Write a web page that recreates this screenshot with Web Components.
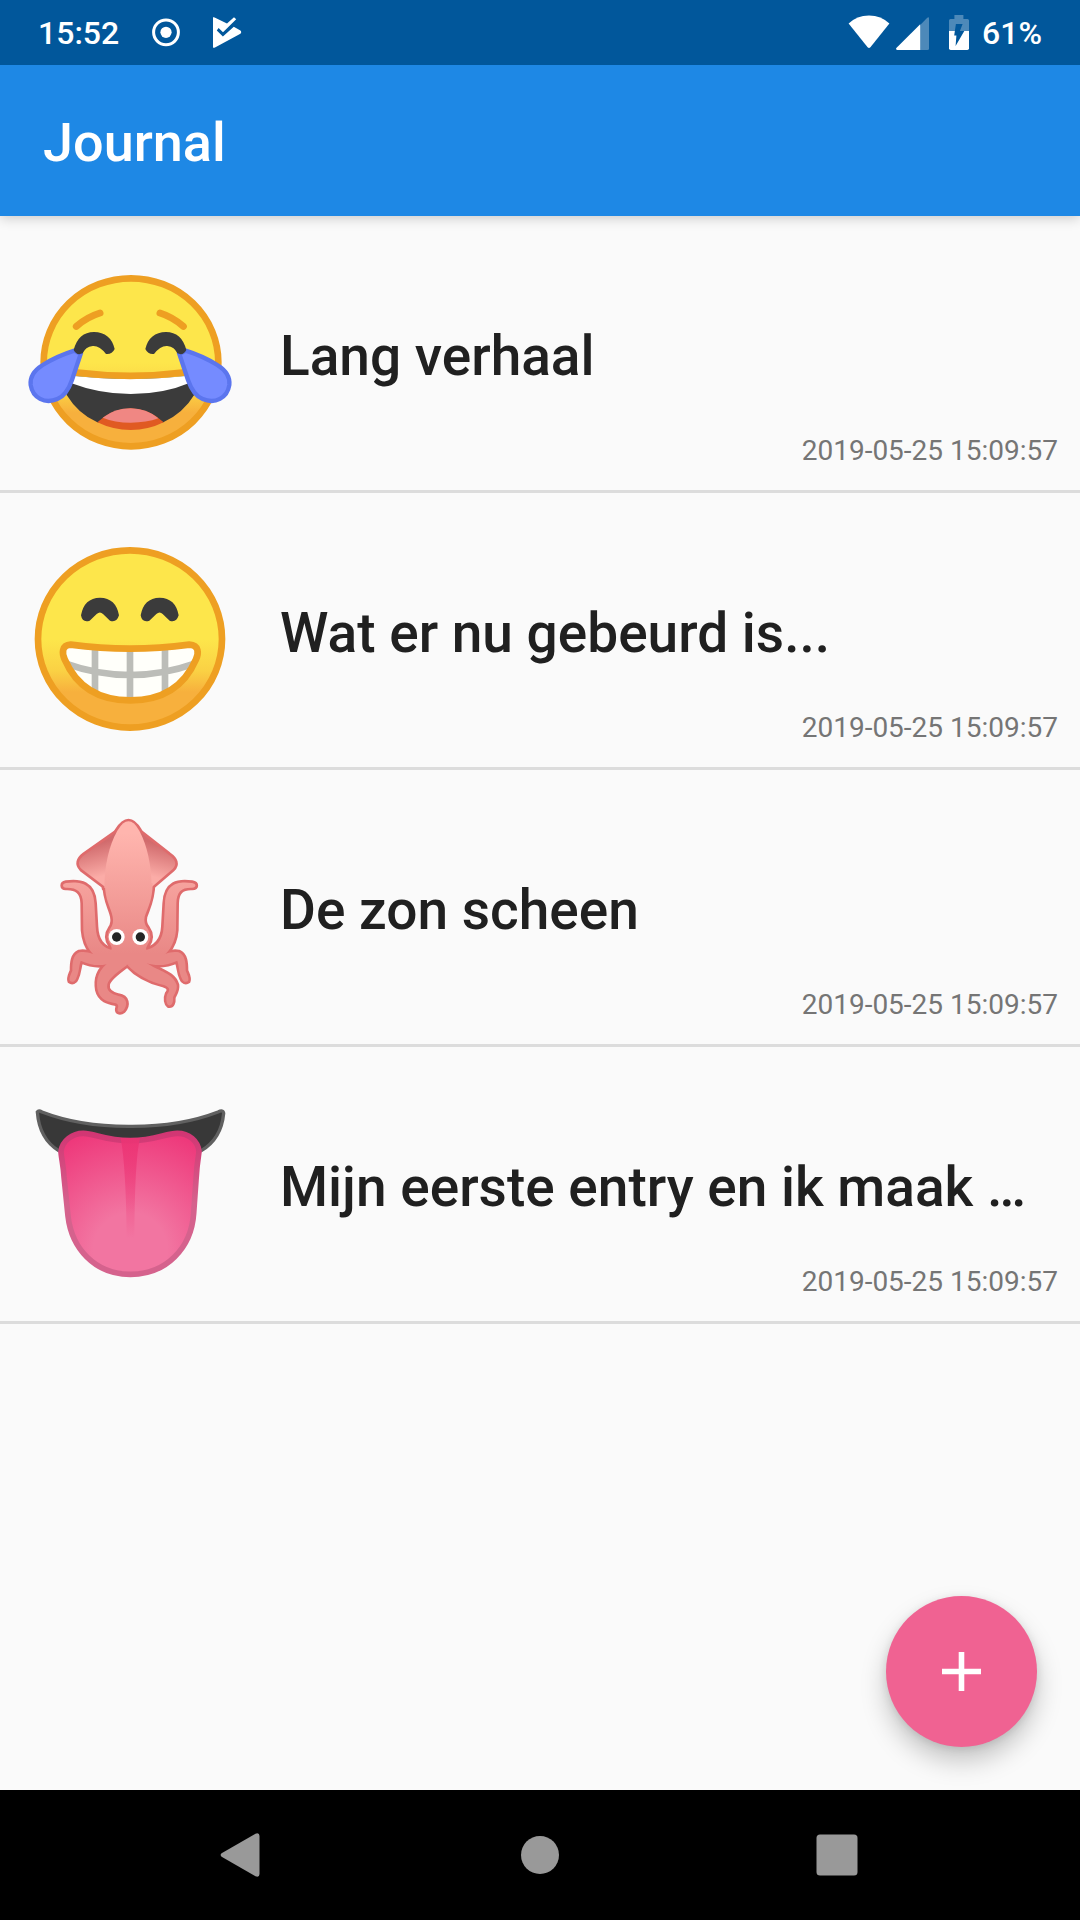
<!DOCTYPE html>
<html lang="nl">
<head>
<meta charset="utf-8">
<meta name="viewport" content="width=device-width, initial-scale=1">
<title>Journal</title>
<style>
body { margin: 0; background: #fafafa; font-family: Roboto, "Noto Sans", sans-serif; }
</style>
</head>
<body>
<journal-app>
  <status-bar slot="status"><span slot="time">15:52</span><span slot="charge">61%</span></status-bar>
  <app-bar slot="header">Journal</app-bar>
  <journal-entry mood="joy"><span slot="title">Lang verhaal</span><time slot="date">2019-05-25 15:09:57</time></journal-entry>
  <journal-entry mood="grin"><span slot="title">Wat er nu gebeurd is...</span><time slot="date">2019-05-25 15:09:57</time></journal-entry>
  <journal-entry mood="squid"><span slot="title">De zon scheen</span><time slot="date">2019-05-25 15:09:57</time></journal-entry>
  <journal-entry mood="tongue"><span slot="title">Mijn eerste entry en ik maak …</span><time slot="date">2019-05-25 15:09:57</time></journal-entry>
  <add-button slot="action"></add-button>
  <system-nav slot="nav"></system-nav>
</journal-app>

<script>
const define = (name, html) => customElements.define(name, class extends HTMLElement {
  constructor() {
    super();
    this.attachShadow({ mode: 'open' }).innerHTML = html;
  }
});

define('journal-app', `
<style>
  :host { display: flex; flex-direction: column; min-height: 100vh; }
  main { flex: 1; position: relative; }
  ::slotted([slot=action]) { position: absolute; right: 43px; bottom: 43px; }
</style>
<slot name="status"></slot>
<slot name="header"></slot>
<main><slot></slot><slot name="action"></slot></main>
<slot name="nav"></slot>`);

define('status-bar', `
<style>
  :host { display: flex; justify-content: space-between; align-items: center; height: 65px; position: relative; z-index: 2;
    padding: 0 38px; background: #01579b; color: #fff; font-size: 32px; line-height: 36px; font-weight: 500; }
  div { display: flex; align-items: center; }
  svg { display: block; flex: none; height: 35px; }
  .notes { gap: 33px; }
  .device { gap: 13px; }
  .radio { gap: 6px; margin-right: 7px; }
</style>
<div class="notes">
  <slot name="time"></slot>
  <svg width="28" viewBox="0 0 28 35"><circle cx="14" cy="17.3" r="12.4" fill="none" stroke="#fff" stroke-width="3"/><circle cx="14" cy="17.3" r="5.6" fill="#fff"/></svg>
  <svg width="30" viewBox="1 0 30 35"><path fill="#fff" d="M0.3 3.8Q.3 1.6 2.6 2.4L15 8.6 22 2.2 24.2 4.2 11 17.2 6.6 13 4.8 15.6 10.9 21.6 21.8 11.8 28.4 15.6Q30 17.2 28.4 18.8L3 32.6Q.3 33.4.3 31Z" overflow="visible"/></svg>
</div>
<div class="device">
  <div class="radio">
    <svg width="42" viewBox="0 0 42 35"><path fill="#fff" d="M.6 8.6Q8.8.5 21 .5T41.4 8.6L22.4 32.2Q21 33.7 19.6 32.2Z"/></svg>
    <svg width="33" viewBox="0 0 33 35"><path fill="#4d89b9" d="M24 10.3 31 3Q33 1.3 33 3.6V33.5Q33 35 31.5 35H24Z"/><path fill="#fff" d="M24.2 9.3V35H1.2Q-.8 34.4.6 32.8Z"/></svg>
  </div>
  <svg width="20" viewBox="0 0 20 35"><path fill="#4d89b9" d="M5.4 0h9v4H18.5Q20 4 20 5.5V16.2H0V5.5Q0 4 1.5 4H5.4Z"/><path fill="#fff" d="M0 16H20V33.3Q20 35 18.3 35H1.7Q0 35 0 33.3Z"/><path fill="#01579b" d="M6.9 9H13.6L10.9 16H15.3L6.6 31 7.4 20.500H5.200Z"/></svg>
  <slot name="charge"></slot>
</div>`);

define('app-bar', `
<style>
  :host { display: flex; align-items: center; height: 151px; box-sizing: border-box; padding: 4px 43px 0; background: #1e88e5; color: #fff;
    box-shadow: 0 2px 12px rgba(0,0,0,.2); position: relative; }
  h1 { margin: 0; font-size: 54px; line-height: 64px; font-weight: 500; }
</style>
<h1><slot></slot></h1>`);

const face = (id, shape) => `
  <defs><linearGradient id="${id}" x1="0" y1="0" x2="0" y2="1"><stop offset=".5" stop-color="#fde64b"/><stop offset=".68" stop-color="#fad144"/><stop offset=".8" stop-color="#f7b03d"/></linearGradient></defs>
  ${shape}`;

const squidParts = `
  <path d="M78 249C120 243 160 250 163 310L167 380C169 420 184 445 225 452V490C160 485 134 440 130 390L129 310C128 275 110 262 78 263 66 262 66 251 78 249Z"/>
  <path d="M456 249C414 243 378 250 375 310L371 380C369 420 350 445 309 452V490C374 485 404 440 408 390L409 310C410 275 424 262 456 263 470 262 470 251 456 249Z"/>
  <path d="M200 462C170 475 150 450 118 457 98 465 97 490 97 512 92 525 86 535 90 543 96 548 105 545 108 536 118 515 116 500 122 482 150 495 180 500 215 490Z"/>
  <path d="M334 462C364 475 384 450 416 457 436 465 437 490 437 512 442 525 448 535 444 543 438 548 429 545 426 536 416 515 418 500 412 482 384 495 354 500 319 490Z"/>
  <path d="M215 480C172 510 168 540 173 570 180 600 205 606 228 610 236 614 236 620 233 626 230 638 242 638 250 632 264 615 262 592 235 588 212 582 198 572 202 553 205 535 240 510 262 494Z"/>
  <path d="M262 494C290 525 330 545 372 555 392 562 390 572 382 582 376 596 380 612 386 616 396 618 400 608 399 592 404 580 412 570 410 555 400 520 360 515 318 488Z"/>
  <path d="M195 250C194 300 214 325 218 350Q222 370 212 384 194 410 212 436 222 450 200 470 180 500 262 494 345 500 330 468 312 450 322 436 340 410 322 384 310 370 314 350C322 325 338 300 338 250Z"/>
  <path d="M232 92Q266 36 298 92 334 160 335 264H193Q194 160 232 92Z"/>`;

const squidFins = `
  <path d="M232 95 134 164Q105 186 125 207L195 260 250 200Z" fill="url(#fl)"/>
  <path d="M298 95 386 164Q418 186 398 207L336 260 280 200Z" fill="url(#fr)"/>`;

const moods = {
  joy: `<g transform="translate(0 51)">${face('f', '<ellipse cx="363" cy="337" rx="262" ry="252" fill="url(#f)" stroke="#ee9f22" stroke-width="20"/>')}
    <g fill="none" stroke="#ee9f22" stroke-width="21" stroke-linecap="round"><path d="M199 229Q231 201 270 189M520 229Q488 201 450 189"/></g>
    <path d="M170 376Q362 398 556 376L556 430Q520 490 460 517L362 538 262 517Q205 492 170 435Z" fill="#3b3b3b"/>
    <path d="M170 376Q362 398 550 376L540 398Q460 432 362 432 270 432 180 398Z" fill="#fff"/>
    <path d="M262 517Q305 476 362 475 417 476 461 517 415 540 362 540T262 517Z" fill="#e05a22"/>
    <path d="M278 503Q315 475 362 475T445 505Q410 518 362 518T278 503Z" fill="#f08783"/>
    <path d="M195 367Q362 388 525 367" fill="none" stroke="#ee9f22" stroke-width="20"/>
    <path id="tear" d="M193 302Q142 318 98 345 58 370 62 405C68 444 105 463 142 447Q170 436 186 390L212 312Z" fill="#758bff" stroke="#5b75ee" stroke-width="13"/>
    <use href="#tear" transform="matrix(-1 0 0 1 720 0)"/>
    <path d="M191 300Q205 246 252 246 302 247 314 297 306 314 288 312 268 286 248 288 226 291 218 310 200 318 191 300Z" fill="#3b3b3b"/>
    <path d="M529 300Q515 246 468 246 418 247 406 297 414 314 432 312 452 286 472 288 494 291 502 310 520 318 529 300Z" fill="#3b3b3b"/></g>`,
  grin: `<g transform="translate(0 60)">${face('f', '<ellipse cx="360" cy="327" rx="276" ry="266" fill="url(#f)" stroke="#ee9f22" stroke-width="20"/>')}
    <path id="eye" d="M213 256Q222 204 270 203 318 204 327 256 320 279 300 272L279 252Q270 243 260 252L239 272Q217 279 213 256Z" fill="#3b3b3b"/>
    <use href="#eye" x="179"/>
    <clipPath id="m"><path d="M182 344Q360 368 538 344C568 346 566 370 558 388 514 490 430 511 361 511S208 490 164 388C156 370 154 346 182 344Z"/></clipPath>
    <g clip-path="url(#m)"><path fill="#fffffa" d="M140 330H580V520H140Z"/><path d="M165 400Q360 470 556 400M255 340V500M360 340V510M465 340V500" fill="none" stroke="#bcbdb8" stroke-width="20"/></g>
    <path d="M182 344Q360 368 538 344C568 346 566 370 558 388 514 490 430 511 361 511S208 490 164 388C156 370 154 346 182 344Z" fill="none" stroke="#ee9f22" stroke-width="20"/></g>`,
  squid: `<g transform="translate(90 39)">
    <defs>
      <linearGradient id="b" gradientUnits="userSpaceOnUse" x1="0" y1="100" x2="0" y2="460"><stop offset="0" stop-color="#ffb5ae"/><stop offset="1" stop-color="#e98886"/></linearGradient>
      <linearGradient id="fl" gradientUnits="userSpaceOnUse" x1="155" y1="135" x2="180" y2="230"><stop offset="0" stop-color="#d16b6d"/><stop offset="1" stop-color="#fbaca7"/></linearGradient>
      <linearGradient id="fr" gradientUnits="userSpaceOnUse" x1="365" y1="135" x2="340" y2="230"><stop offset="0" stop-color="#d16b6d"/><stop offset="1" stop-color="#fbaca7"/></linearGradient>
    </defs>
    <g stroke="#df6b6c" stroke-width="16" stroke-linejoin="round">${squidFins}${squidParts}</g>
    ${squidFins}<g fill="url(#b)">${squidParts}</g>
    <circle cx="230" cy="411" r="24" fill="#fff"/><circle cx="301" cy="411" r="24" fill="#fff"/><circle cx="230" cy="411" r="14" fill="#252525"/><circle cx="301" cy="411" r="14" fill="#252525"/></g>`,
  tongue: `<g transform="translate(0 78)">
    <defs><radialGradient id="t" gradientUnits="userSpaceOnUse" cx="361" cy="480" r="370"><stop offset=".3" stop-color="#f275a1"/><stop offset="1" stop-color="#ee397b"/></radialGradient>
    <linearGradient id="e" x1="0" y1="0" x2="0" y2="1"><stop offset="0" stop-color="#d23673"/><stop offset=".5" stop-color="#d5628d"/></linearGradient>
    <linearGradient id="c" x1="0" y1="0" x2="0" y2="1"><stop offset="0" stop-color="#ec3474" stop-opacity=".9"/><stop offset="1" stop-color="#ec3474" stop-opacity="0"/></linearGradient></defs>
    <path d="M82 66Q86 60 96 66 210 110 361 109 510 110 624 66 640 58 641 70 634 146 574 182H146Q88 146 82 66Z" fill="#383838" stroke="#606060" stroke-width="10"/>
    <path d="M153 185C156 152 188 130 220 130 254 130 286 152 361 152S466 130 502 130C536 130 564 152 567 185 564 205 560 230 558 270L551 370C544 475 468 553 361 553S185 475 174 378L162 260C160 225 154 205 153 185Z" fill="url(#t)" stroke="url(#e)" stroke-width="17"/>
    <path d="M332 144H390Q374 210 373 445H350Q348 230 332 144Z" fill="url(#c)"/></g>`
};

customElements.define('journal-entry', class extends HTMLElement {
  constructor() {
    super();
    this.attachShadow({ mode: 'open' });
  }
  connectedCallback() {
    this.shadowRoot.innerHTML = `
<style>
  :host { display: block; }
  article { display: flex; align-items: center; height: 274px; padding: 0 22px 0 10px; border-bottom: 3px solid #dcdcdc; }
  svg { display: block; flex: none; width: 240px; height: 240px; }
  .text { flex: 1; min-width: 0; align-self: stretch; display: flex; flex-direction: column; justify-content: flex-end;
    gap: 45px; padding: 0 0 21px 30px; box-sizing: border-box; }
  h2 { margin: 0; font-size: 55px; line-height: 64px; font-weight: 500; color: #202020; white-space: nowrap; overflow: hidden; text-overflow: ellipsis; }
  .date { align-self: flex-end; font-size: 28px; line-height: 36px; color: #757575; }
</style>
<article>
  <svg viewBox="0 0 720 720" aria-hidden="true">${moods[this.getAttribute('mood')]}</svg>
  <div class="text"><h2><slot name="title"></slot></h2><div class="date"><slot name="date"></slot></div></div>
</article>`;
  }
});

define('add-button', `
<style>
  :host { display: block; }
  button { display: flex; align-items: center; justify-content: center; width: 151px; height: 151px; padding: 0; border: 0;
    border-radius: 50%; background: #f06292; box-shadow: 0 14px 26px rgba(0,0,0,.22), 0 2px 8px rgba(0,0,0,.1); }
  svg { display: block; width: 39px; height: 39px; }
</style>
<button type="button" aria-label="Nieuw"><svg viewBox="0 0 39 39"><path d="M19.5 0V39M0 19.5H39" stroke="#fff" stroke-width="5.6"/></svg></button>`);

define('system-nav', `
<style>
  :host { display: block; background: #000; }
  nav { display: flex; justify-content: space-around; align-items: center; height: 130px; padding: 0 94px; }
  button { display: block; padding: 0; border: 0; background: none; }
  svg { display: block; width: 44px; height: 44px; fill: #999; }
</style>
<nav>
  <button type="button" aria-label="Terug"><svg viewBox="3 0 44 44" overflow="visible"><path d="M3.6 20.3 37.5.7Q41.5-.6 41.5 3V41Q41.5 44.6 37.5 43.3L3.6 23.7Q1.6 22 3.6 20.3Z"/></svg></button>
  <button type="button" aria-label="Start"><svg viewBox="0 0 44 44"><circle cx="22" cy="22" r="19"/></svg></button>
  <button type="button" aria-label="Overzicht"><svg viewBox="0 0 44 44"><rect x="1.5" y="1.5" width="41" height="41" rx="3.5"/></svg></button>
</nav>`);
</script>
</body>
</html>
